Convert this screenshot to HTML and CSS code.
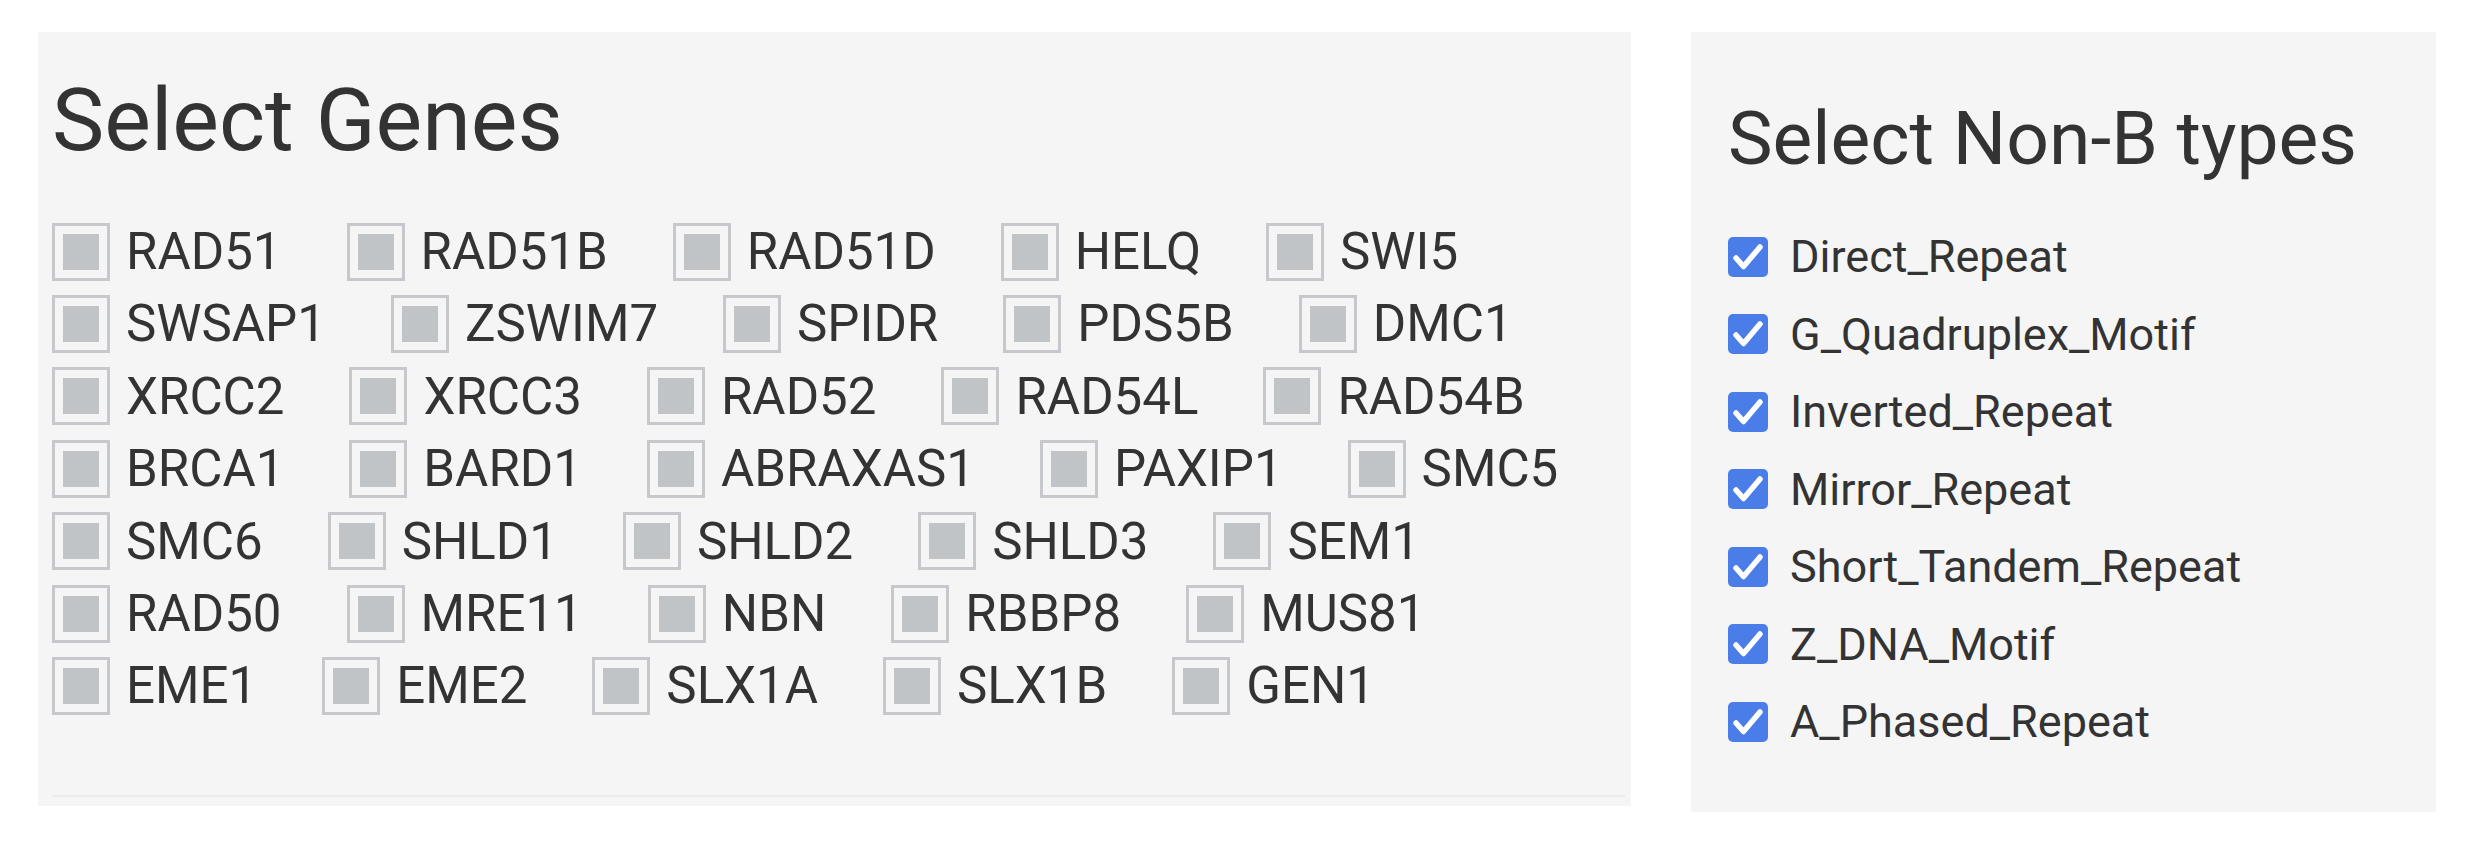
FILE: index.html
```html
<!DOCTYPE html>
<html lang="en">
  <head>
    <meta charset="UTF-8" />
    <meta name="viewport" content="width=device-width, initial-scale=1.0" />
    <title>Gene and Non-B Selection</title>
    <link rel="stylesheet" href="styles.css">
  </head>
  <body>
    <div class="page">
      <div class="well genes">
        <h2>Select Genes</h2>
        <div class="gene-list" id="geneList"></div>
        <div class="rule"></div>
      </div>
      <div class="well nonb">
        <h3>Select Non-B types</h3>
        <div class="type-list" id="typeList"></div>
      </div>
    </div>
    <script>
      const genes = [
        "RAD51", "RAD51B", "RAD51D", "HELQ", "SWI5",
        "SWSAP1", "ZSWIM7", "SPIDR", "PDS5B", "DMC1",
        "XRCC2", "XRCC3", "RAD52", "RAD54L", "RAD54B",
        "BRCA1", "BARD1", "ABRAXAS1", "PAXIP1", "SMC5",
        "SMC6", "SHLD1", "SHLD2", "SHLD3", "SEM1",
        "RAD50", "MRE11", "NBN", "RBBP8", "MUS81",
        "EME1", "EME2", "SLX1A", "SLX1B", "GEN1"
      ];
      const types = [
        "Direct_Repeat", "G_Quadruplex_Motif", "Inverted_Repeat",
        "Mirror_Repeat", "Short_Tandem_Repeat", "Z_DNA_Motif", "A_Phased_Repeat"
      ];

      // Gene checkboxes (unchecked)
      const geneList = document.getElementById("geneList");
      for (const gene of genes) {
        const item = document.createElement("label");
        item.className = "gene";
        item.innerHTML = `<span class="gene-box"></span><span>${gene}</span>`;
        geneList.appendChild(item);
      }

      // Non-B type checkboxes (all checked)
      const typeList = document.getElementById("typeList");
      for (const type of types) {
        const item = document.createElement("label");
        item.className = "type";
        item.innerHTML = `
          <span class="type-box">
            <svg viewBox="0 0 40 40" width="40" height="40">
              <polyline points="8,21 15.5,29.5 32,10" fill="none" stroke="#fff" stroke-width="5.5" stroke-linecap="round" stroke-linejoin="round" />
            </svg>
          </span>
          <span>${type}</span>`;
        typeList.appendChild(item);
      }
    </script>
  </body>
</html>
```

FILE: styles.css
```css
body {
  font-family: Roboto, "Liberation Sans", sans-serif;
  color: #333;
  background-color: #fff;
  margin: 0;
  padding: 0;
}
.page {
  display: flex;
  align-items: flex-start;
  gap: 60px;
  padding: 32px 0 0 38px;
}
.well {
  background-color: #f5f5f5;
  box-sizing: border-box;
}
.genes {
  width: 1593px;
  padding: 35px 6px 9px 14px;
}
.genes h2 {
  font-size: 88px;
  font-weight: 400;
  line-height: 1.2;
  margin: 0;
}
.gene-list {
  display: flex;
  flex-wrap: wrap;
  column-gap: 65px;
  row-gap: 14.4px;
  margin-top: 50px;
  padding-right: 8px;
}
.gene {
  display: flex;
  align-items: center;
  height: 58px;
  font-size: 51px;
  white-space: nowrap;
}
.gene-box {
  display: flex;
  align-items: center;
  justify-content: center;
  width: 58px;
  height: 58px;
  box-sizing: border-box;
  border: 3px solid #c6c8cb;
  margin-right: 16px;
}
.gene-box::after {
  content: "";
  width: 36px;
  height: 36px;
  background-color: #c1c4c7;
}
.rule {
  height: 2px;
  background-color: #ebebeb;
  margin-top: 80px;
}
.nonb {
  width: 745px;
  padding: 61px 36px 70px 37px;
}
.nonb h3 {
  font-size: 75px;
  font-weight: 400;
  line-height: 1.2;
  margin: 0;
}
.type-list {
  display: flex;
  flex-direction: column;
  gap: 37.5px;
  margin-top: 53.5px;
}
.type {
  display: flex;
  align-items: center;
  height: 40px;
  font-size: 45px;
  white-space: nowrap;
}
.type-box {
  display: block;
  width: 40px;
  height: 40px;
  border-radius: 5px;
  background-color: #4a7de8;
  margin-right: 22px;
}
.type-box svg {
  display: block;
}
```
